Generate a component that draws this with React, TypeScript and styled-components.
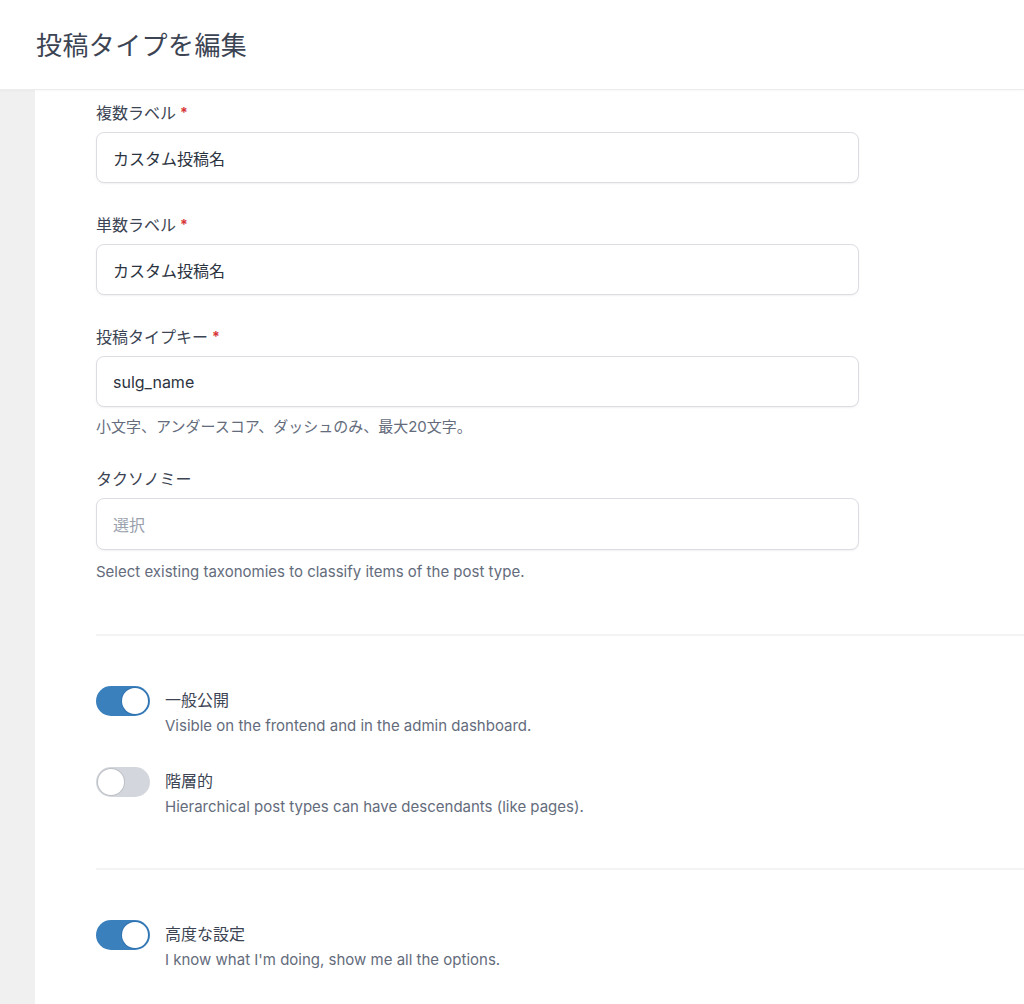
import React from "react";
import styled, { createGlobalStyle } from "styled-components";

const Global = createGlobalStyle`
  html, body { margin: 0; padding: 0; background: #ffffff; }
  body {
    font-family: Inter, "Noto Sans CJK JP", "Noto Sans", sans-serif;
    -webkit-font-smoothing: antialiased;
  }
  * { box-sizing: border-box; }
`;

const Page = styled.div`
  width: 1024px;
  height: 1004px;
  overflow: hidden;
  display: flex;
  flex-direction: column;
`;

const Header = styled.header`
  height: 90px;
  flex: none;
  display: flex;
  align-items: center;
  padding: 0 0 2px 36px;
  background: #ffffff;
  border-bottom: 1px solid #ececec;
  box-shadow: 0 1px 2px rgba(0, 0, 0, 0.03);
  position: relative;
  z-index: 1;
`;

const Title = styled.h1`
  margin: 0;
  font-size: 26px;
  font-weight: 400;
  color: #3c4453;
  letter-spacing: 0.4px;
`;

const Body = styled.div`
  flex: 1;
  display: flex;
  min-height: 0;
`;

const Sidebar = styled.aside`
  width: 35px;
  flex: none;
  background: #f0f0f0;
`;

const Main = styled.main`
  flex: 1;
  background: #ffffff;
  padding: 13px 0 0 61px;
`;

const Section = styled.section`
  width: 763px;
  display: flex;
  flex-direction: column;
`;

const Field = styled.div<{ $gap?: number }>`
  display: flex;
  flex-direction: column;
  margin-bottom: ${(p) => p.$gap ?? 32}px;
`;

const Label = styled.div`
  font-size: 16px;
  line-height: 20px;
  color: #3c4453;
  margin-bottom: 9px;
  display: flex;
  align-items: center;
  gap: 4px;
`;

const Required = styled.span`
  color: #d63638;
  font-size: 14px;
  font-weight: 700;
`;

const InputBox = styled.div<{ $placeholder?: boolean; $h?: number }>`
  height: ${(p) => p.$h ?? 51}px;
  border: 1px solid #dcdde3;
  border-radius: 8px;
  background: #ffffff;
  box-shadow: 0 1px 2px rgba(16, 24, 40, 0.06);
  display: flex;
  align-items: center;
  padding: 0 16px;
  font-size: 16px;
  color: ${(p) => (p.$placeholder ? "#9aa1ad" : "#2c3340")};
`;

const Help = styled.div<{ $top?: number }>`
  font-size: 15px;
  line-height: 20px;
  color: #646c7c;
  margin-top: ${(p) => p.$top ?? 10}px;
`;

const Divider = styled.hr`
  border: none;
  height: 2px;
  background: #f4f4f5;
  margin: 0;
  width: 100%;
`;

const DividerWrap = styled.div<{ $top: number }>`
  margin-top: ${(p) => p.$top}px;
  margin-bottom: 50px;
`;

const ToggleRow = styled.div<{ $gap?: number }>`
  display: flex;
  align-items: flex-start;
  gap: 15px;
  margin-bottom: ${(p) => p.$gap ?? 0}px;
`;

const Switch = styled.div<{ $on: boolean }>`
  width: 54px;
  height: 30px;
  flex: none;
  border-radius: 15px;
  background: ${(p) => (p.$on ? "#3a80bd" : "#d3d6dc")};
  position: relative;
`;

const Knob = styled.span<{ $on: boolean }>`
  position: absolute;
  top: 2px;
  left: ${(p) => (p.$on ? "26px" : "2px")};
  width: 26px;
  height: 26px;
  border-radius: 50%;
  background: #ffffff;
  box-shadow: 0 0 0 1px ${(p) => (p.$on ? "rgba(30,90,150,0.35)" : "rgba(0,0,0,0.1)")};
`;

const ToggleText = styled.div`
  display: flex;
  flex-direction: column;
  padding-top: 4px;
`;

const ToggleTitle = styled.div`
  font-size: 16px;
  line-height: 20px;
  color: #3c4453;
`;

const ToggleDesc = styled.div`
  font-size: 15px;
  line-height: 20px;
  color: #646c7c;
  margin-top: 6px;
`;

const Toggle: React.FC<{ on: boolean; title: string; desc: string; gap?: number }> = ({
  on,
  title,
  desc,
  gap,
}) => (
  <ToggleRow $gap={gap}>
    <Switch $on={on} role="switch" aria-checked={on}>
      <Knob $on={on} />
    </Switch>
    <ToggleText>
      <ToggleTitle>{title}</ToggleTitle>
      <ToggleDesc>{desc}</ToggleDesc>
    </ToggleText>
  </ToggleRow>
);

export default function App() {
  return (
    <Page>
      <Global />
      <Header>
        <Title>投稿タイプを編集</Title>
      </Header>
      <Body>
        <Sidebar />
        <Main>
          <Section>
            <Field>
              <Label>
                複数ラベル <Required>*</Required>
              </Label>
              <InputBox>カスタム投稿名</InputBox>
            </Field>
            <Field>
              <Label>
                単数ラベル <Required>*</Required>
              </Label>
              <InputBox>カスタム投稿名</InputBox>
            </Field>
            <Field>
              <Label>
                投稿タイプキー <Required>*</Required>
              </Label>
              <InputBox>sulg_name</InputBox>
              <Help>小文字、アンダースコア、ダッシュのみ、最大20文字。</Help>
            </Field>
            <Field $gap={0}>
              <Label>タクソノミー</Label>
              <InputBox $placeholder $h={52}>選択</InputBox>
              <Help $top={12}>Select existing taxonomies to classify items of the post type.</Help>
            </Field>
          </Section>
          <DividerWrap $top={52}>
            <Divider />
          </DividerWrap>
          <Toggle
            on
            title="一般公開"
            desc="Visible on the frontend and in the admin dashboard."
            gap={31}
          />
          <Toggle
            on={false}
            title="階層的"
            desc="Hierarchical post types can have descendants (like pages)."
          />
          <DividerWrap $top={51}>
            <Divider />
          </DividerWrap>
          <Toggle on title="高度な設定" desc="I know what I'm doing, show me all the options." />
        </Main>
      </Body>
    </Page>
  );
}
